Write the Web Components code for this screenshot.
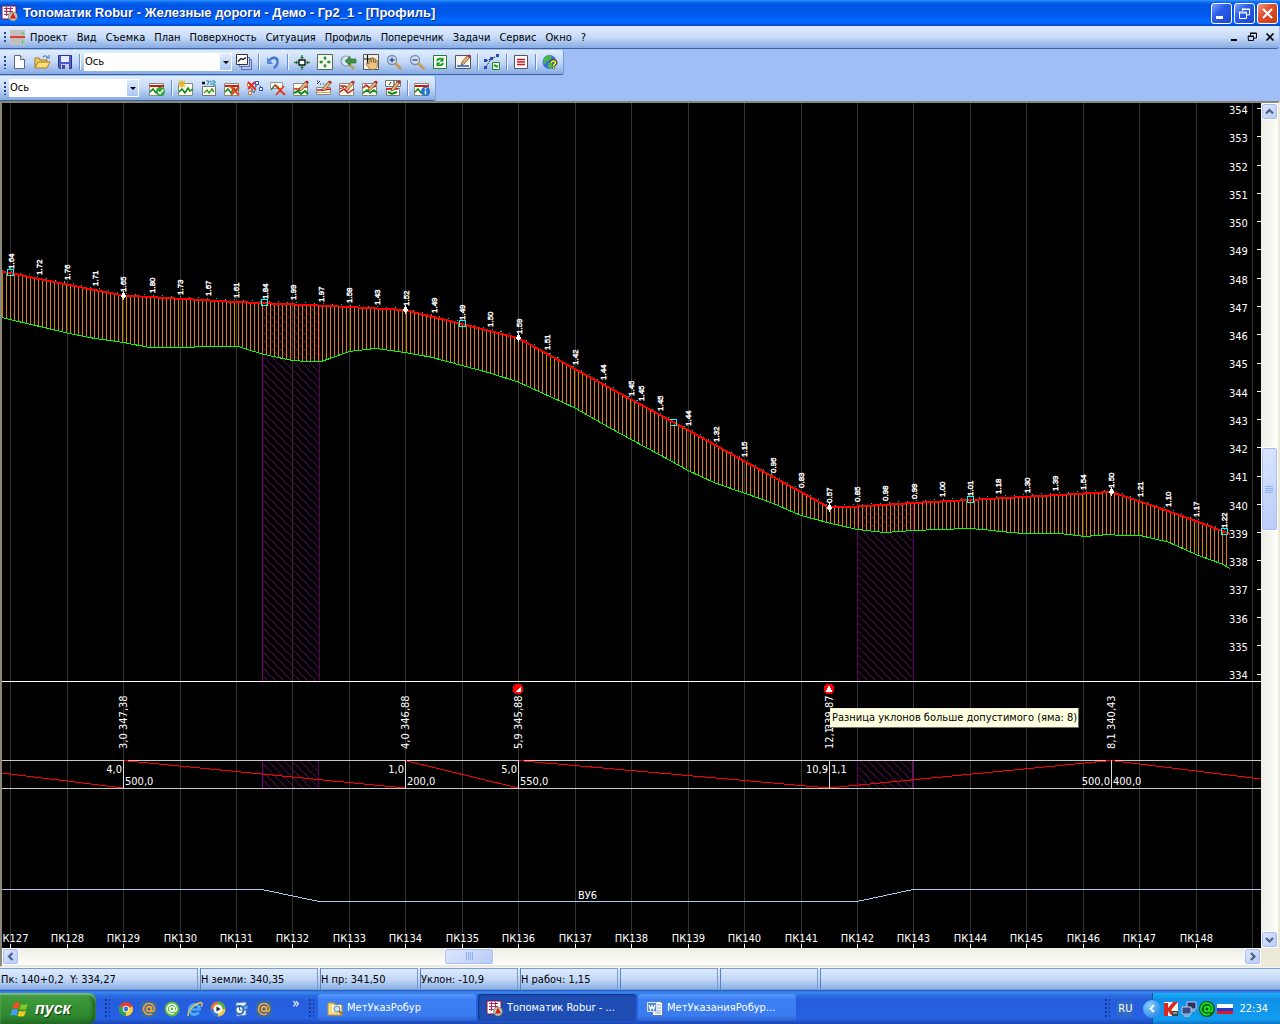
<!DOCTYPE html>
<html lang="ru">
<head>
<meta charset="utf-8">
<title>Топоматик Robur - Железные дороги - Демо - Гр2_1 - [Профиль]</title>
<style>
html, body { margin: 0; height: 100%; }
body { font: 11px/14px "DejaVu Sans Condensed", "Liberation Sans", sans-serif; color: #000; background: #9ebef5; overflow: hidden; }
</style>
</head>
<body>
<robur-app></robur-app>
<script>
// ---------- icons, 16x16 ----------
const pencil = '<path d="M7 8l6-7 2 2-6 7-3 1z" fill="#e8b878" stroke="#7a4a2a" stroke-width=".8"/><path d="M12 2l2-1.500 2 1.500-1.500 2z" fill="#b03030"/>';
const hills = '<path d="M1 12l3-3 3 4 3-5 2 3 3-2" fill="none" stroke="#0a8a1a" stroke-width="1.500"/>';
const sheet = '<path d="M.5 3.500h14v12H.5z" fill="#fffef0" stroke="#8a8a7a"/>';
const redTop = '<path d="M1 6h14" stroke="#d01818" stroke-width="2"/>';
const cross = '<path d="M6 6l9 9M15 7l-8 8" stroke="#f03a18" stroke-width="2"/>';
const lens = '<circle cx="6" cy="6" r="4.500" fill="#cfe2f6" stroke="#7c8ea8" stroke-width="1.300"/><path d="M9.500 9.500l5 5" stroke="#c89858" stroke-width="2.600" stroke-linecap="round"/>';
const ICONS = {
  app: '<path d="M0 1h14v13H0z" fill="#fff" stroke="#8c1038"/><path d="M2 3.500h9M2 6.500h9M2 9.500h5M4.500 2v9M8.500 2v6" stroke="#b03060" stroke-width="1.200"/><circle cx="11" cy="11.500" r="4.500" fill="#b8c8b0" stroke="#5a7a5a" stroke-width=".6"/><path d="M8 13.500l3-6 3 6z" fill="#e01818"/>',
  doc: '<path d="M0 0h16v16H0z" fill="#c0c0c0"/><path d="M0 7.500h16" stroke="#f01010" stroke-width="1.600"/><path d="M13.500 2v3M13.500 11v4" stroke="#30d030"/>',
  fresh: '<path d="M3.500 1.500h6l4 4v9h-10z" fill="#fff" stroke="#5a6a8a"/><path d="M9.500 1.500v4h4" fill="#dde6f4" stroke="#5a6a8a"/>',
  open: '<path d="M1 14V4h4l1 2h7v3" fill="#f4cc68" stroke="#a87818"/><path d="M1 14l3-6h12l-3 6z" fill="#ffdc78" stroke="#a87818"/><path d="M9 3c2-2 4-1 4.500 1M12 4h3V1" fill="none" stroke="#5a82b8" stroke-width="1.200"/>',
  save: '<path d="M1.500 1.500h13v13h-12l-1-1z" fill="#4a5ac8" stroke="#2a3488"/><path d="M4 2h8v6H4z" fill="#e8ecfa"/><path d="M4 10h8v5H4z" fill="#c0c8e0"/><path d="M5 11h3v4H5z" fill="#3a48a8"/>',
  layers: '<path d="M5.500 5.500h10v10h-10z" fill="#b8c0f0" stroke="#5868b0"/><path d="M3.500 3.500h10v9h-10z" fill="#d0d6f8" stroke="#5868b0"/><path d="M.5.500h11v10H.5z" fill="#fff" stroke="#333"/><path d="M2 7.500l3-3 2 1 3-2" fill="none" stroke="#111" stroke-width="1.200"/>',
  undo: '<path d="M4 7c3-5 9-4 8.500 1 0 3-2 5-4 6" fill="none" stroke="#4a78d0" stroke-width="2.400"/><path d="M2 3v7h6z" fill="#5a88dc"/>',
  fitbox: '<path d="M5 6h6v5H5z" fill="#fff" stroke="#111" stroke-width="1.400"/><path d="M8 1v3M8 16v-3M0 8.500h3M16 8.500h-3" stroke="#2a7a3a" stroke-width="1.400"/><path d="M6 3h4L8 5.500zM6 14h4l-2-2.500zM2 6.500v4l2.500-2zM14 6.500v4l-2.500-2z" fill="#2a7a3a"/>',
  fitall: '<path d="M.5.5h15v15H.5z" fill="#f2f8ee" stroke="#5a6a5a"/><path d="M8 3v3M8 13v-3M3 8h3M13 8h-3" stroke="#2a8a3a" stroke-width="1.400"/><path d="M6 4.500L8 2l2 2.500M6 11.500L8 14l2-2.500M4.500 6L2 8l2.500 2M11.500 6L14 8l-2.500 2" fill="#2a8a3a"/>',
  prev: '<circle cx="6" cy="7" r="5" fill="#d8e4f0" stroke="#8a98ac" stroke-width="1.200"/><path d="M10 11l4 4" stroke="#c89858" stroke-width="2.600"/><path d="M5 7l5-4.500V5h6v4h-6v2.500z" fill="#3c9440" stroke="#1c6424" stroke-width=".6"/>',
  hand: '<path d="M.5.500h15v15H.5z" fill="#f0f0e4" stroke="#555"/><path d="M4.500 1v8M1 5h7" stroke="#111" stroke-width="1.200"/><path d="M6 14l-3-4 1-1 2 1V5l1.500-.5.7 4V4l1.800-.5.5 5V4.500l1.600 0 .2 4.500.5-3 1.500.5v6L12 15.500H7.500z" fill="#ecc484" stroke="#7a5828" stroke-width=".7"/>',
  zoomin: lens + '<path d="M3.500 6h5M6 3.500v5" stroke="#2848a0" stroke-width="1.400"/>',
  zoomout: lens + '<path d="M3.500 6h5" stroke="#2848a0" stroke-width="1.400"/>',
  refresh: '<path d="M1.500 1.500h13v13h-13z" fill="#f4fbf0" stroke="#2a7a3a"/><path d="M5 7a3.500 3 0 0 1 5-2M11 9a3.500 3 0 0 1-5 2" fill="none" stroke="#0a9a1a" stroke-width="1.800"/><path d="M11.500 3v4.500H7.500zM4.500 13V8.500h4z" fill="#0a9a1a"/>',
  edit: '<path d="M.5 1.500h15v13H.5z" fill="#f8f4ec" stroke="#555"/><path d="M2 12h12" stroke="#4a80e8" stroke-width="2"/>' + pencil,
  nodes: '<path d="M2 13L7 5l6-3M2 7l5-2M8 13h5" stroke="#222" fill="none" stroke-dasharray="2 1"/><path d="M0 5h3v3H0zM6 3h3v3H6zM12 0h3v3h-3zM0 12h3v3H0z" fill="#2848b8"/><path d="M8.500 8.500h7v7h-7z" fill="#fff" stroke="#1a8a2a"/><path d="M10 12h4M10 12l1.500-1.500M14 12l-1.500 1.500" stroke="#0a9a1a" fill="none" stroke-width="1.300"/>',
  list: '<path d="M1.500 1.500h13v13h-13z" fill="#fff" stroke="#555"/><path d="M4 5.500h8M4 8h8M4 10.500h8" stroke="#c8182a" stroke-width="1.400"/>',
  help: '<circle cx="7.500" cy="8" r="7" fill="#3a70d8"/><path d="M2 4c3-4 7-3 8-1l-2 3-3 1-2 3-2-1zM6 9h4l1 3-3 3-2-2z" fill="#48b848"/><path d="M9 9c0-3 5-3 5 0 0 1.500-2.400 1.500-2.400 3M11.600 13v2" stroke="#3a4820" stroke-width="3" fill="none"/><path d="M9.300 9c0-2.800 4.500-2.500 4.200 0-.3 1.200-2 1.200-2 3M11.600 13v1.700" stroke="#fff040" stroke-width="1.600" fill="none"/>',
  ok: sheet + redTop + hills + '<circle cx="11.500" cy="11.500" r="4.500" fill="#28a838"/><path d="M9 11.500l2 2 3.500-4" stroke="#fff" stroke-width="1.600" fill="none"/>',
  star: sheet + hills + '<path d="M4 0v8M0 4h8M1 1l6 6M7 1L1 7" stroke="#e8b428" stroke-width="1.200"/>',
  num: '<path d="M1.500 6.500h13v9h-13z" fill="#fffef0" stroke="#777"/><path d="M1 3h3" stroke="#111" stroke-width="2.500"/><path d="M5 1h3l-1.500 4M9 1h1v4M11 1h3v2h-2v2h3" fill="none" stroke="#2888b0"/><path d="M3 13l3-3 2 3 3-4 2 3" stroke="#3a9a20" fill="none" stroke-width="1.400"/>',
  del: sheet + redTop + hills + cross,
  nodesdel: '<path d="M2 5l5 8 3-10 5 5M2 13L12 2" fill="none" stroke="#444" stroke-dasharray="2 1"/><path d="M.5 3.500h3v3h-3zM1.500 11.500h3v3h-3z" fill="#fff" stroke="#e87020"/><path d="M8.500 1.500h3v3h-3zM12.500 7.500h3v3h-3z" fill="#fff" stroke="#2848c0"/><path d="M1 2l8 8M8 2l-7 7" stroke="#e82818" stroke-width="1.800"/>',
  cut: '<path d="M.5 2.500h12v6H.5z" fill="#fffef0" stroke="#999"/><path d="M1 10l4-5 3 2 3 5" fill="none" stroke="#2a8a3a" stroke-width="1.500"/><path d="M5 5l10 10M14 6l-8 9" stroke="#e83818" stroke-width="1.800"/>',
  pen1: sheet + '<path d="M1 9h5l3-2h6" stroke="#d01818" stroke-width="1.600" fill="none"/><path d="M1 13l4-2 3 3 4-3 3 3" stroke="#0a8a1a" stroke-width="2" fill="none"/>' + pencil,
  pen2: '<path d="M.5 7.500h14v7H.5z" fill="#fffef0" stroke="#888"/><path d="M1 4l3-3M1 1h1M4 4h1M7 4h1M10 4h1" stroke="#222"/><path d="M1 10h6l8-1" stroke="#d01818" stroke-width="1.600"/><path d="M1 12.500h14" stroke="#e8a040"/>' + pencil,
  pen3: sheet + '<path d="M1 6h5l4 4M1 12l4-3 4 4 6-4" fill="none" stroke="#d01818" stroke-width="1.500"/><path d="M1 9l4-2" stroke="#333"/>' + pencil,
  pen4: sheet + '<path d="M1 8l3-3 4 3 6-2" fill="none" stroke="#d01818" stroke-width="1.700"/><path d="M1 13l4-3 3 3 4-3 3 3" stroke="#0a8a1a" stroke-width="1.600" fill="none"/>' + pencil,
  pen5: '<path d="M.5.500h15v6H.5zM1.500 8.500h13v7h-13z" fill="#fffef0" stroke="#777"/><path d="M4 5l2-3M9 1v5M12 1v5" stroke="#333"/><path d="M1 9h12" stroke="#d01818" stroke-width="1.600"/><path d="M3 12l4 2 5-2" stroke="#0a8a1a" stroke-width="2" fill="none"/>' + pencil,
  info: sheet + redTop + hills + '<circle cx="11.500" cy="11.500" r="4.500" fill="#2070d0"/><path d="M11.500 10.500v4M11.500 8v1.500" stroke="#fff" stroke-width="1.600"/>',
  chrome: '<circle cx="8" cy="8" r="7" fill="#e8402c"/><path d="M8 8L1.500 5A7 7 0 0 0 8 15z" fill="#2ea44a"/><path d="M8 8l6.500-2.500A7 7 0 0 1 8 15z" fill="#f8d030"/><circle cx="8" cy="8" r="3.300" fill="#fff"/><circle cx="8" cy="8" r="2.400" fill="#3a78e0"/>',
  mail: '<rect width="16" height="16" rx="3" fill="#3a6aa8"/><circle cx="8" cy="8" r="2.400" fill="none" stroke="#f8a830" stroke-width="1.600"/><path d="M10.500 5.500v4c.5 2 3 1 3-1.500a5.500 5.500 0 1 0-2.500 4.600" fill="none" stroke="#f8a830" stroke-width="1.500"/>',
  agent: '<circle cx="8" cy="8" r="7.500" fill="#58b838"/><circle cx="8" cy="8" r="2.200" fill="none" stroke="#fff" stroke-width="1.500"/><path d="M10.200 6v3.500c.5 1.500 2.500.8 2.500-1.500A4.800 4.800 0 1 0 10.500 12" fill="none" stroke="#fff" stroke-width="1.400"/>',
  ie: '<circle cx="7.500" cy="8.500" r="5" fill="none" stroke="#48b0f8" stroke-width="3" stroke-dasharray="27 5" stroke-dashoffset="-3"/><path d="M4 8.500h10" stroke="#48b0f8" stroke-width="2.200"/><path d="M1.500 15C-1 11 8 2 14.500 1.500c1.500 1 .5 3-.5 4" fill="none" stroke="#f8c840" stroke-width="1.300"/>',
  media: '<circle cx="8" cy="8" r="7.500" fill="#e87828"/><path d="M8 .5A7.500 7.500 0 0 1 15.500 8H8z" fill="#58b040"/><path d="M.5 8A7.500 7.500 0 0 0 8 15.500V8z" fill="#3878d8"/><path d="M8 15.500A7.500 7.500 0 0 0 15.500 8H8z" fill="#f0c840"/><circle cx="8" cy="8" r="4.500" fill="#f4f8fc"/><path d="M6.500 5.500l4 2.500-4 2.500z" fill="#222"/>',
  outlook: '<path d="M3 2l10-1v13l-9 1z" fill="#e8f2fc" stroke="#6a90c0"/><circle cx="6.500" cy="9" r="4" fill="#fff" stroke="#2868b8" stroke-width="1.800"/><path d="M6.500 6v3H9" stroke="#2868b8" fill="none"/><path d="M10 5l5-1v4l-4 1z" fill="#68a8e8" stroke="#2868b8"/>',
  folder: '<path d="M1 3h6l1 2h7v10H1z" fill="#f8dc80" stroke="#c89830"/><path d="M5 5h9v7H5z" fill="#fff8d8"/><circle cx="10" cy="9" r="3" fill="#c8e4f8" stroke="#5888b8"/><path d="M12 11l3 3" stroke="#a86828" stroke-width="2"/>',
  word: '<path d="M5.500 1.500h8l2 2v12h-10z" fill="#fff" stroke="#5878a8"/><path d="M8 5h6M8 8h6M8 11h6M8 13h6" stroke="#88a8d8"/><path d="M.5 2.500h9v9h-9z" fill="#5888d0" stroke="#d8e4f8"/><path d="M2 5l1.500 4.500L5 6l1.500 3.500L8 5" fill="none" stroke="#fff" stroke-width="1.300"/>',
  kasper: '<path d="M1 1h14v14H1z" fill="#f4f0ec"/><path d="M1 2h4v5l5-6h5L8 9l5 5H8l-3-4v5H1z" fill="#d82820"/><path d="M9 10h6v5H9z" fill="#444"/><path d="M10 12h4" stroke="#ddd"/>',
  net: '<path d="M6 1h9v7H6z" fill="#28306c" stroke="#c8ccd8"/><path d="M1 6h9v7H1z" fill="#38488c" stroke="#c8ccd8"/><path d="M3 15h6M11 10h3" stroke="#b0b4c4" stroke-width="1.500"/>',
  at: '<circle cx="8" cy="8" r="8" fill="#0a5a10"/><circle cx="8" cy="8" r="2.400" fill="none" stroke="#18e828" stroke-width="1.600"/><path d="M10.500 5.500v4c.5 2 3 1 3-1.500a5.800 5.800 0 1 0-2.500 4.600" fill="none" stroke="#18e828" stroke-width="1.600"/>',
  flag: '<path d="M0 3h16v4H0z" fill="#fff"/><path d="M0 7h16v3H0z" fill="#2038d0"/><path d="M0 10h16v3H0z" fill="#e01818"/>',
  windows: '<path d="M2.500 3c2-1.500 4-1 5.500 0L6.600 8C5 7 3 7 1 8z" fill="#f05020"/><path d="M9 3.500c2 1 4 1 6-.5l-1.500 5c-2 1-4 1-6 0z" fill="#80c828"/><path d="M.7 9c2-1.500 4-1 5.600 0L5 14c-1.600-1-3.600-1-5.600 0z" fill="#38a0f0"/><path d="M7.300 9.500c2 1 4 1 6-.5l-1.500 5c-2 1-4 1-6 0z" fill="#f8c820"/>'
};

class RoburElement extends HTMLElement {
  connectedCallback() {
    if (this.shadowRoot) return;
    this.attachShadow({ mode: 'open' }).innerHTML =
      `<style>*{box-sizing:border-box}button,select,input{font:inherit;color:inherit;margin:0;padding:0;border:0;background:none;border-radius:0}${this.css()}</style>${this.html()}`;
  }
  css() { return ''; }
  html() { return '<slot></slot>'; }
}

customElements.define('x-icon', class extends RoburElement {
  css() { return ':host{display:block;width:16px;height:16px;flex:none}svg{display:block;width:100%;height:100%;overflow:visible}'; }
  html() { return `<svg viewBox="0 0 16 16" aria-hidden="true">${ICONS[this.getAttribute('name')] || ''}</svg>`; }
});

customElements.define('title-bar', class extends RoburElement {
  css() { return `
    :host{display:flex;align-items:center;height:26px;padding:0 2px;gap:2px;flex:none;
      background:linear-gradient(#3a95ff 0,#0a6cf4 2px,#0054e3 5px,#0058ec 14px,#0668ff 20px,#0068ff 23px,#0040c0 26px);}
    h1{flex:1;margin:0 0 0 3px;font:bold 13px/18px "Liberation Sans",sans-serif;color:#fff;text-shadow:1px 1px 0 #0a2a80;white-space:nowrap;overflow:hidden}
    button{width:21px;height:21px;border:1px solid #fff;border-radius:3px;background:linear-gradient(135deg,#7aa0f8,#2a5ce8 40%,#1c48d0);display:grid;place-items:center}
    button.close{background:linear-gradient(135deg,#f0a080,#e05030 40%,#c83810)}
    svg{width:15px;height:15px;display:block}`; }
  html() { return `<x-icon name="app"></x-icon><h1><slot></slot></h1>
    <button aria-label="Свернуть"><svg viewBox="0 0 15 15"><path d="M2 10h7v3H2z" fill="#fff"/></svg></button>
    <button aria-label="Восстановить"><svg viewBox="0 0 15 15" fill="none" stroke="#fff"><path d="M5 3h8M5 3.500h8M5.500 2v3M12.500 3v6H9.500M2 6h7.500M2.500 6v6.500h7V6M2 7h8"/></svg></button>
    <button class="close" aria-label="Закрыть"><svg viewBox="0 0 15 15"><path d="M3 3l9 9M12 3l-9 9" stroke="#fff" stroke-width="2.200"/></svg></button>`; }
});

const GRIP = '.grip{width:6px;align-self:stretch;margin:5px 0;background:radial-gradient(circle at 4px 2px,#27418a 0 1px,#fff0 1.500px) 0 0/6px 4px repeat-y}';

customElements.define('menu-bar', class extends RoburElement {
  css() { return `${GRIP}
    :host{display:flex;align-items:center;height:23px;margin-right:1px;padding:0 0 0 1px;flex:none;background:linear-gradient(#dfecfd,#c8dcf8 50%,#86abe4);border-bottom:1px solid #3b619c;border-radius:0 0 3px 0}
    nav{display:flex;gap:9px;margin-left:5px;padding-top:2px;flex:1}
    x-icon{margin-left:3px;width:15px;height:15px}
    a{color:#000;text-decoration:none}
    button{width:18px;height:16px;display:grid;place-items:center}svg{width:10px;height:10px;display:block}`; }
  html() { return `<span class="grip"></span><x-icon name="doc"></x-icon><nav>${
    'Проект,Вид,Съемка,План,Поверхность,Ситуация,Профиль,Поперечник,Задачи,Сервис,Окно,?'.split(',').map(t => `<a href="#">${t}</a>`).join('')}</nav>
    <button aria-label="Свернуть окно"><svg viewBox="0 0 10 10"><path d="M2 7h6v2H2z"/></svg></button>
    <button aria-label="Восстановить окно"><svg viewBox="0 0 10 10" fill="none" stroke="#000"><path d="M3 1h6.500M3.500 1v2.500M9.500 1v5H7M1 4h6M1 4.500h5.500v4h-5zM3 1.500h6"/></svg></button>
    <button aria-label="Закрыть окно"><svg viewBox="0 0 10 10"><path d="M1.500 1.500l7 7M8.500 1.500l-7 7" stroke="#000" stroke-width="1.600"/></svg></button>`; }
});

customElements.define('tool-bar', class extends RoburElement {
  css() { return `${GRIP}
    :host{display:flex;align-items:center;align-self:flex-start;height:25px;padding:0 2px 0 1px;flex:none;background:linear-gradient(#dfecfd,#c4d9f7 50%,#86abe4);border-bottom:1px solid #3b619c;border-right:1px solid #7a9cd4;border-radius:0 3px 3px 0}`; }
  html() { return '<span class="grip"></span><slot></slot>'; }
});
customElements.define('tool-button', class extends RoburElement {
  css() { return ':host{display:block;flex:none}button{width:23px;height:22px;display:grid;place-items:center}'; }
  html() { const n = this.getAttribute('name'); return `<button aria-label="${n}"><x-icon name="${n}"></x-icon></button>`; }
});
customElements.define('tool-separator', class extends RoburElement {
  css() { return ':host{display:block;flex:none;width:2px;height:16px;margin:0 1px 0 3px;border-left:1px solid #6a8ccb;border-right:1px solid #f1f9ff}'; }
  html() { return ''; }
});
customElements.define('tool-select', class extends RoburElement {
  css() { return `:host{display:grid;align-items:center;flex:none;height:18px;background:#fff}
    select{grid-area:1/1;appearance:none;height:18px;width:100%;padding:0 1px;line-height:18px;outline:0}
    i{grid-area:1/1;justify-self:end;width:11px;height:16px;margin-right:1px;display:grid;place-items:center;pointer-events:none;background:linear-gradient(#dfecfd,#a8c6f2)}
    i::after{content:"";border:3px solid transparent;border-top-color:#000;border-bottom:0}`; }
  html() { return `<select aria-label="${this.getAttribute('label')}"><option>Ось</option></select><i></i>`; }
});

// ---------- longitudinal profile ----------
customElements.define('profile-chart', class extends RoburElement {
  css() { return `:host{display:block;position:relative;flex:1;min-width:0;background:#000;overflow:hidden}
    svg{display:block;width:100%;height:100%}
    text{fill:#fff;font-family:"DejaVu Sans Condensed","Liberation Sans",sans-serif;font-size:11px}
    .mark{font-family:"Liberation Sans",sans-serif;font-size:8px;stroke:#fff;stroke-width:.4px}
    .e{text-anchor:end}.m{text-anchor:middle}
    ::slotted(*){position:absolute;left:828px;top:605px}`; }
  html() {
    const px = n => Math.round(10.2 + 56.45 * n) + .5;
    const design = [[2,272],[10,273],[67,284.500],[123,295.500],[236,302],[330,306],[405,310],[462,324],[518,338],[575,369],[632,400],[688,430],[744,461],[801,492],[829,507.500],[857,506.500],[913,503],[970,500],[1040,496],[1111,492],[1140,501.500],[1168,511],[1196,521],[1230,534]];
    const ground = [[2,317.500],[10,319.500],[67,333],[95,338.500],[123,342.500],[150,347.500],[193,347.500],[197,346.500],[238,346.500],[262,354],[292,360.500],[307,361.500],[321,361.500],[330,358.500],[349,351.500],[376,348.500],[405,352.500],[430,357],[462,365.500],[490,373],[518,382],[575,408],[610,428],[632,440],[660,455],[688,470.500],[715,483],[744,493],[772,503],[801,515.500],[829,523],[857,529.500],[885,532.500],[913,530.500],[968,528.500],[984,529.500],[1000,531.500],[1022,533.500],[1060,533.500],[1085,536.500],[1105,534.800],[1140,535.500],[1168,542],[1196,554.500],[1222,564],[1230,568.500]];
    const at = (line, x) => { for (let i = 1; i < line.length; i++) if (x <= line[i][0]) { const [a, b] = line[i - 1], [c, d] = line[i]; return b + (d - b) * (x - a) / (c - a); } return line.at(-1)[1]; };
    const pts = (l, dy = 0) => l.map(([x, y]) => x + ',' + (y + dy)).join(' ');
    let s = '';
    for (let n = 0; n <= 22; n++) s += `<path d="M${px(n)} 103V2000" stroke="#333"/>`;
    // unfavourable-ground sections
    const zones = [[262, 319], [857, 913]];
    for (const [a, b] of zones) {
      const poly = design.filter(p => p[0] > a && p[0] < b);
      s += `<path d="M${a} ${at(design, a)}L${poly.map(p => p.join(' ')).join('L')}${poly.length ? 'L' : ''}${b} ${at(design, b)}V681H${a}z" fill="url(#hatch)"/><path d="M${a} 760h${b - a}v28H${a}z" fill="url(#hatch)"/>`;
    }
    s += `<path d="M262.500 302V681M262.500 760v28M912.500 760v28" stroke="#800080"/><path d="M319.500 306V681M857.500 507V681M913.500 503V681M318.500 760v28M857.500 760v28" stroke="#5a005a"/>`;
    let v = '';
    for (let x = 2; x < 1230; x += 4) v += `M${x + .5} ${Math.round(at(design, x))}V${Math.round(at(ground, x))}`;
    s += `<path d="${v}" stroke="#e08000"/>`;
    s += `<polyline points="${pts(ground)}" fill="none" stroke="#0f0"/>`;
    s += `<polyline points="${pts(design, -2)}" fill="none" stroke="#0cc" stroke-dasharray="1 8"/>`;
    s += `<polyline points="${pts(design)}" fill="none" stroke="#f00" stroke-width="2"/>`;
    for (const [x, y] of [[7, 269], [261, 299], [459, 320], [967, 496], [1221, 528]]) s += `<path d="M${x + .5} ${y + .5}h6v6h-6z" fill="none" stroke="#0ff"/>`;
    s += '<path d="M670 419.500h6.500v6H671" fill="none" stroke="#0ff"/>';
    for (const x of [123, 405, 518, 829, 1111]) { const y = Math.round(at(design, x)); s += `<path d="M${x} ${y - 5}h1v2h1v2h1v2h-1v1h-1v2h-1v-2h-1v-1h-1v-2h1v-2h1z" fill="#fff"/>`; }
    // working marks
    const marks = '1.64 1.72 1.76 1.71 1.65 1.80 1.73 1.67 1.61 1.84 1.99 1.97 1.58 1.43 1.52 1.49 1.49 1.50 1.59 1.51 1.42 1.44 1.45 1.45 1.44 1.32 1.15 0.96 0.83 0.57 0.85 0.98 0.99 1.00 1.01 1.18 1.30 1.39 1.54 1.50 1.21 1.10 1.17 1.22'.split(' ').map((t, k) => [10.500 + 28.225 * k, t]);
    marks.push([641, '1.45']);
    for (const [x, t] of marks) s += `<text class="mark" transform="translate(${Math.round(x + 3)} ${Math.round(at(design, x) - 4)}) rotate(-90)">${t}</text>`;
    // elevation scale
    for (let i = 0; i <= 20; i++) s += `<text x="1229" y="${Math.round(114 + 28.250 * i)}">${354 - i}</text><path d="M1257 ${Math.round(108 + 28.280 * i) + .5}h4" stroke="#fff"/>`;
    s += '<path d="M2 681.500H3000" stroke="#fff"/><path d="M2 760.500H3000M2 788.500H3000" stroke="#c8c8c8"/>';
    s += '<path d="M2 773L123 788M123 760.500L405 788M405 760.500L518 788M518 760.500L829 788L1111 760.500L1261 779" stroke="#f00" fill="none"/>';
    const br = [[123, '3,0', '347,38', '4,0', 0, '500,0', 1], [405, '4,0', '346,88', '1,0', 0, '200,0', 1], [518, '5,9', '345,88', '5,0', 0, '550,0', 1], [829, '12,1', '339,87', '10,9', 0, '1,1', 0], [1111, '8,1', '340,43', '500,0', 1, '400,0', 1]];
    for (const [x, r, h, l, ly, q, qy] of br) {
      s += `<path d="M${x + .5} 760v28" stroke="#ddd"/><text transform="translate(${x + 4} 749) rotate(-90)">${r}</text><text transform="translate(${x + 4} 730) rotate(-90)">${h}</text>`;
      s += `<text class="e" x="${x - 1}" y="${ly ? 785 : 773}">${l}</text><text x="${x + 2}" y="${qy ? 785 : 773}">${q}</text>`;
    }
    s += '<circle cx="518" cy="689" r="5.500" fill="#f00"/><path d="M521 686v6h-6z" fill="#fff"/><circle cx="829" cy="689" r="5.500" fill="#f00"/><path d="M829 685l3.500 7h-7z" fill="#fff"/>';
    s += '<path d="M2 889.500H262L319 901.500H857L913 889.500H3000" stroke="#a8c8f0" fill="none"/><text x="578" y="899">ВУ6</text>';
    for (let n = 0; n <= 21; n++) s += `<text class="m" x="${px(n) + (n ? 0 : 5)}" y="942">${n ? 'П' : ''}К${127 + n}</text><path d="M${px(n)} 944v5" stroke="#fff"/>`;
    return `<svg role="img" aria-label="Продольный профиль"><defs><pattern id="hatch" width="8" height="8" patternUnits="userSpaceOnUse" patternTransform="translate(0 5)"><path d="M-1 -1L9 9M-1 7l2 2M7 -1l2 2" stroke="#7a007a" stroke-width=".8"/></pattern></defs><g transform="translate(-2 -103)" shape-rendering="crispEdges">${s}</g></svg><slot></slot>`;
  }
});
customElements.define('tool-tip', class extends RoburElement {
  css() { return ':host{display:block;padding:2px 1px;background:#ffffe1;border:1px solid;border-color:#f4f0e0 #6c6a5c #6c6a5c #f4f0e0;line-height:14px;white-space:nowrap}'; }
});

customElements.define('scroll-bar', class extends RoburElement {
  css() { return `:host{display:flex;flex:none;background:#f8f7f2}
    :host([vertical]){flex-direction:column;width:17px;background:linear-gradient(90deg,#eeede5,#fefefb)}
    :host(:not([vertical])){height:17px;background:linear-gradient(#eeede5,#fefefb)}
    button{flex:none;width:17px;height:17px;border:1px solid #fff;border-radius:3px;background:linear-gradient(135deg,#dce6fe,#b8ccf8);box-shadow:inset 0 0 0 1px #a8bcf0;display:grid;place-items:center}
    .thumb.v{height:84px}.thumb.h{width:50px}
    svg{width:9px;height:9px;display:block}path{fill:none;stroke:#4d6185;stroke-width:2.200}
    .thumb path{stroke:#8cb0f8;stroke-width:1}
    .a{flex:var(--before) 0 0}.b{flex:var(--after) 0 0}`; }
  html() {
    const v = this.hasAttribute('vertical');
    const [p, n] = v ? ['M1 6.500l3.500-3.500L8 6.500', 'M1 3l3.500 3.500L8 3'] : ['M6.500 1L3 4.500 6.500 8', 'M3 1l3.500 3.500L3 8'];
    const g = v ? 'M0 1.500h8M0 3.500h8M0 5.500h8M0 7.500h8' : 'M1.500 0v8M3.500 0v8M5.500 0v8M7.500 0v8';
    return `<button aria-label="Назад"><svg viewBox="0 0 9 9"><path d="${p}"/></svg></button><span class="a"></span>
      <button class="thumb ${v ? 'v' : 'h'}" aria-label="Ползунок"><svg viewBox="0 0 9 9"><path d="${g}"/></svg></button><span class="b"></span>
      <button aria-label="Вперёд"><svg viewBox="0 0 9 9"><path d="${n}"/></svg></button>`;
  }
});

customElements.define('status-bar', class extends RoburElement {
  css() { return `:host{display:flex;gap:2px;flex:none;height:23px;border-top:1px solid #eef4fd;background:linear-gradient(#dfecfd,#c4d9f7 50%,#86abe4)}
    span{flex:none;width:98px;border:1px solid #7a9cd4;border-left-color:#5a80c0;padding:4px 0 0;line-height:14px;white-space:pre}
    span.first{width:198px;border-left:0;padding-left:1px}span.pos{width:118px}span.fill{flex:1;border-right:0}`; }
  html() { return '<span class="first">Пк: 140+0,2  Y: 334,27</span><span class="pos">Н земли: 340,35</span><span>Н пр: 341,50</span><span>Уклон: -10,9</span><span>Н рабоч: 1,15</span><span></span><span></span><span class="fill"></span>'; }
});

customElements.define('task-bar', class extends RoburElement {
  css() { return `:host{display:flex;flex:none;height:34px;padding-top:3px;align-items:stretch;color:#fff;background:linear-gradient(#1c50b8 0,#3a88f0 2px,#2a6ae0 6px,#245cdc 12px,#2662e4 28px,#1c48b4)}
    .start{width:96px;display:flex;align-items:center;gap:6px;padding-left:11px;font:italic bold 16px/20px "Liberation Sans",sans-serif;text-shadow:1px 1px 1px #143c10;border-radius:0 8px 8px 0;background:linear-gradient(#4a9c48,#3c9838 20%,#2f8a30 70%,#256e26);box-shadow:inset 0 2px 2px #80c080,inset -3px 0 4px #1c5c20}
    .start x-icon{width:18px;height:18px}
    .dots{width:6px;margin:5px 0;background:radial-gradient(circle at 2px 2px,#123c98 0 1px,#fff0 1.500px) 0 0/4px 4px}
    .quick{display:flex;align-items:center;width:204px;margin-left:8px;padding-right:8px}
    .quick .dots{align-self:stretch;margin-right:4px}
    .quick button{width:23px;height:24px;display:grid;place-items:center}
    .more{margin:0 0 12px 17px;font-size:14px}
    .tasks{display:flex;gap:2px;flex:1;padding:1px 0 3px;margin-left:4px}
    .task{display:flex;align-items:center;gap:4px;width:158px;padding:0 9px;border-radius:3px;background:linear-gradient(#5a98fc,#3c80f4 20%,#3a7cf0 80%,#2c62d0);white-space:nowrap}
    .task.on{background:#1e4eb4;box-shadow:inset 1px 1px 2px #10307c}
    .lang{align-self:center;margin:0 19px 0 7px;background:#316ac5;padding:1px 1px}
    .tray{display:flex;align-items:center;gap:2px;padding:0 12px 0 10px;background:linear-gradient(#18b0f4,#1290e8 20%,#109cee 85%,#0c70c8);border-left:1px solid #1050a0}
    .chev{width:18px;height:18px;border-radius:9px;margin-left:-20px;background:radial-gradient(circle at 6px 5px,#80ccff,#1878e0);display:grid;place-items:center}
    .chev svg{width:9px;height:9px}
    time{margin-left:4px}`; }
  html() {
    return `<button class="start"><x-icon name="windows"></x-icon>пуск</button>
      <div class="quick"><span class="dots"></span>${'chrome,mail,agent,ie,media,outlook,mail'.split(',').map(n => `<button aria-label="${n}"><x-icon name="${n}"></x-icon></button>`).join('')}<span class="more">»</span></div>
      <span class="dots"></span>
      <div class="tasks"><button class="task"><x-icon name="folder"></x-icon>МетУказРобур</button><button class="task on"><x-icon name="app"></x-icon>Топоматик Robur - ...</button><button class="task"><x-icon name="word"></x-icon>МетУказанияРобур...</button></div>
      <span class="dots"></span><span class="lang">RU</span>
      <div class="tray"><button class="chev" aria-label="Скрыть значки"><svg viewBox="0 0 9 9"><path d="M6 1L2.500 4.500 6 8" fill="none" stroke="#fff" stroke-width="2"/></svg></button>
      <x-icon name="kasper"></x-icon><x-icon name="net"></x-icon><x-icon name="at"></x-icon><x-icon name="flag"></x-icon><time>22:34</time></div>`;
  }
});

customElements.define('robur-app', class extends RoburElement {
  css() { return `:host{display:flex;flex-direction:column;height:100vh;overflow:hidden}
    .work{flex:1;display:grid;grid-template:minmax(0,1fr) 17px/minmax(0,1fr) 17px;min-height:0;border:solid;border-width:2px;border-color:#8c8878 #ece9d8 #ece9d8 #8c8878;background:#ece9d8}
    .bars{display:flex;flex-direction:column;gap:1px;flex:none;padding-top:1px}
    .wide{width:148px;margin-left:2px}.axis{width:130px;margin:0 6px 0 2px}`; }
  html() {
    const b = l => l.split(' ').map(n => n === '|' ? '<tool-separator></tool-separator>' : `<tool-button name="${n}"></tool-button>`).join('');
    return `<title-bar>Топоматик Robur - Железные дороги - Демо - Гр2_1 - [Профиль]</title-bar><menu-bar></menu-bar>
    <div class="bars">
      <tool-bar>${b('fresh open save |')}<tool-select class="wide" label="Модель"></tool-select>${b('layers | undo | fitbox fitall prev hand zoomin zoomout refresh edit | nodes | list | help')}</tool-bar>
      <tool-bar><tool-select class="axis" label="Ось"></tool-select>${b('ok | star num del nodesdel cut pen1 pen2 pen3 pen4 pen5 | info')}</tool-bar>
    </div>
    <div class="work"><profile-chart><tool-tip role="tooltip">Разница уклонов больше допустимого (яма: 8)</tool-tip></profile-chart>
      <scroll-bar vertical style="--before:328;--after:401"></scroll-bar><scroll-bar style="--before:425;--after:750"></scroll-bar></div>
    <status-bar></status-bar><task-bar></task-bar>`;
  }
});
</script>
</body>
</html>
